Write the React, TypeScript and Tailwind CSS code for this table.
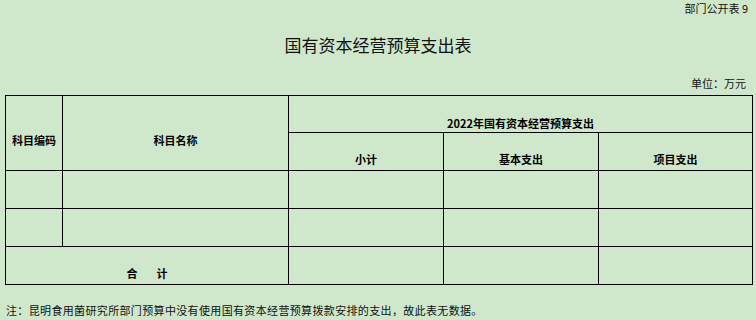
import React from "react";

const font = { fontFamily: '"Noto Sans CJK SC", "Noto Sans", sans-serif' };

function Cell({
  children,
  className = "",
}: {
  children?: React.ReactNode;
  className?: string;
}) {
  return (
    <div
      className={
        "bg-[#cfe8cc] flex items-center justify-center text-[11px] font-bold text-black leading-[14px] " +
        className
      }
    >
      {children}
    </div>
  );
}

export default function App() {
  return (
    <div
      className="w-[756px] h-[320px] bg-[#cfe8cc] text-[#111] overflow-hidden"
      style={font}
    >
      <div className="h-[16px] flex items-center justify-end pr-[8px] text-[11px] leading-[16px]">
        部门公开表 9
      </div>
      <div className="h-[58px] flex items-center justify-center text-[17px] leading-[20px]">
        国有资本经营预算支出表
      </div>
      <div className="h-[21px] flex items-center justify-end pr-[10px] pb-[3px] text-[11px] leading-[14px]">
        单位：万元
      </div>
      <div className="ml-[5px] w-[748px] grid grid-cols-[56px_225px_154px_154px_153px] grid-rows-[36px_37px_37px_37px_37px] gap-px p-px bg-black">
        <Cell className="row-span-2 pt-[13px]">科目编码</Cell>
        <Cell className="row-span-2 pt-[13px]">科目名称</Cell>
        <Cell className="col-span-3 pt-[17px]">2022年国有资本经营预算支出</Cell>
        <Cell className="pt-[14px]">小计</Cell>
        <Cell className="pt-[14px]">基本支出</Cell>
        <Cell className="pt-[14px]">项目支出</Cell>
        <Cell />
        <Cell />
        <Cell />
        <Cell />
        <Cell />
        <Cell />
        <Cell />
        <Cell />
        <Cell />
        <Cell />
        <Cell className="col-span-2 pt-[14px] gap-[19px]">
          <span>合</span>
          <span>计</span>
        </Cell>
        <Cell />
        <Cell />
        <Cell />
      </div>
      <div className="mt-[18px] pl-[6px] text-[11px] leading-[14px] tracking-[0.35px] whitespace-nowrap">
        注：昆明食用菌研究所部门预算中没有使用国有资本经营预算拨款安排的支出，故此表无数据。
      </div>
    </div>
  );
}
